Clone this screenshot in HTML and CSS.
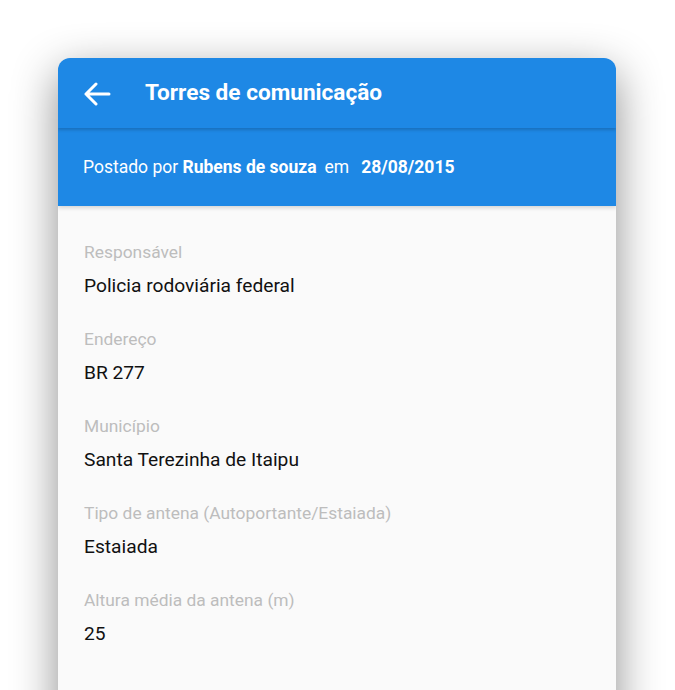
FILE: index.html
```html
<!DOCTYPE html>
<html lang="pt">
<head>
<meta charset="utf-8">
<link rel="stylesheet" href="styles.css">
</head>
<body>
<div class="card">
  <header class="appbar">
    <svg class="back" width="28" height="24" viewBox="0 0 28 24"><path d="M26 12H3M13 2L3 12l10 10" fill="none" stroke="#fff" stroke-width="3" stroke-linecap="round" stroke-linejoin="round"/></svg>
    <h1 class="title">Torres de comunicação</h1>
  </header>
  <div class="meta">Postado por <b>Rubens de souza</b><span class="em">em</span><b>28/08/2015</b></div>
  <div class="content">
    <div class="field"><div class="label">Responsável</div><div class="value">Policia rodoviária federal</div></div>
    <div class="field"><div class="label">Endereço</div><div class="value">BR 277</div></div>
    <div class="field"><div class="label">Município</div><div class="value">Santa Terezinha de Itaipu</div></div>
    <div class="field"><div class="label">Tipo de antena (Autoportante/Estaiada)</div><div class="value">Estaiada</div></div>
    <div class="field"><div class="label">Altura média da antena (m)</div><div class="value">25</div></div>
  </div>
</div>
</body>
</html>
```
FILE: styles.css
```css
html, body { margin: 0; padding: 0; background: #fff; }
body {
  width: 675px; height: 690px; overflow: hidden;
  padding: 58px 0 0 58px; box-sizing: border-box;
  font-family: Roboto, "Liberation Sans", sans-serif;
}
.card {
  width: 558px; height: 700px;
  border-radius: 12px 12px 0 0;
  background: #fafafa;
  box-shadow: 0 14px 45px rgba(0,0,0,0.45);
  overflow: hidden;
}
.appbar {
  height: 70px; background: #1e88e5;
  display: flex; align-items: center;
  padding-left: 25px;
  box-shadow: 0 2px 3px rgba(0,0,0,0.18);
  position: relative; z-index: 1;
}
.back { display: block; margin-right: 34px; margin-top: 1px; }
.title { margin: 0 0 1px; color: #fff; font-size: 22.6px; font-weight: 700; }
.meta {
  height: 78px; background: #1e88e5; color: #fff;
  display: flex; align-items: center; padding-left: 25px;
  font-size: 17.5px; white-space: pre;
  box-shadow: 0 2px 4px rgba(0,0,0,0.15);
  position: relative;
}
.meta b { font-weight: 700; }
.meta .em { margin: 0 12px 0 8px; }
.content { padding: 36px 26px 0; }
.field { height: 87px; }
.label { color: #bdbdbd; font-size: 17.4px; line-height: 20px; }
.value { color: #111; font-size: 19.2px; line-height: 22px; margin-top: 13px; }
```
